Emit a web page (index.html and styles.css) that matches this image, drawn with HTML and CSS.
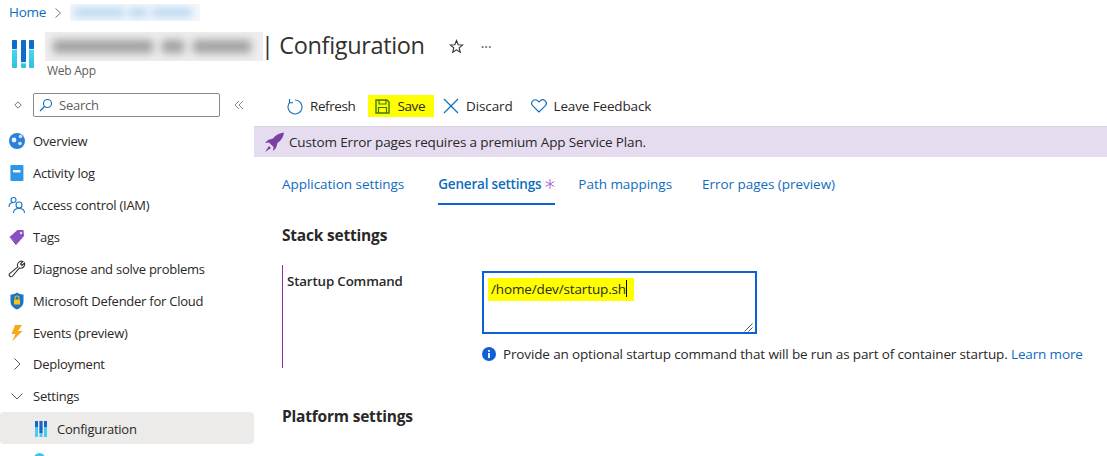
FILE: index.html
```html
<!DOCTYPE html>
<html>
<head>
  <title>Configuration | Web App</title>
  <link rel="stylesheet" href="styles.css">
</head>
<body>
  <div class="crumbs">
    <a href="#">Home</a>
    <svg class="crumb-sep" width="8" height="12" viewBox="0 0 8 12"><path d="M1.5 1.5 6.5 6l-5 4.500" fill="none" stroke="#777" stroke-width="1"/></svg>
    <span class="blur-box crumb-blur"><i></i><i></i><i></i></span>
  </div>

  <div class="title-row">
    <svg class="app-icon" width="24" height="29" viewBox="0 0 24 29">
      <defs><linearGradient id="bar" x1="0" y1="0" x2="0" y2="1"><stop offset="0" stop-color="#50e6ff"/><stop offset="1" stop-color="#32bedd"/></linearGradient></defs>
      <rect x="0" y="0" width="5" height="28" rx="1" fill="url(#bar)"/><rect x="0" y="0" width="5" height="9" rx="1" fill="#0f6cc8"/><rect x="0" y="9" width="5" height="1" fill="#c8eefa"/>
      <rect x="9" y="0" width="5" height="28" rx="1" fill="url(#bar)"/><rect x="9" y="0" width="5" height="22" rx="1" fill="#0f6cc8"/><rect x="9" y="22" width="5" height="1.500" fill="#c8eefa"/>
      <rect x="17" y="0" width="5" height="28" rx="1" fill="url(#bar)"/><rect x="17" y="0" width="5" height="9" rx="1" fill="#0f6cc8"/><rect x="17" y="9" width="5" height="1" fill="#c8eefa"/>
    </svg>
    <div class="title-text">
      <div class="title-line">
        <span class="blur-box title-blur"><i></i><i></i><i></i></span>
        <h1>| Configuration</h1>
        <svg class="star" width="15" height="15" viewBox="0 0 15 15"><path d="M7.500 1.500 9.200 5.700l4.400.3-3.400 2.900 1.100 4.400-3.800-2.400-3.800 2.400 1.100-4.400L1.400 6l4.400-.3z" fill="none" stroke="#333" stroke-width="1.100"/></svg>
        <span class="more">···</span>
      </div>
      <div class="subtitle">Web App</div>
    </div>
  </div>

  <div class="main">
    <aside class="sidebar">
      <div class="search-row">
        <svg width="8" height="8" viewBox="0 0 8 8"><path d="M4 .8 7.200 4 4 7.200.8 4z" fill="none" stroke="#777"/></svg>
        <div class="search">
          <svg width="14" height="14" viewBox="0 0 14 14"><circle cx="8.500" cy="5.500" r="4" fill="none" stroke="#0f6cbd" stroke-width="1.100"/><path d="M5.500 8.500 1 13" stroke="#0f6cbd" stroke-width="1.200"/></svg>
          <span>Search</span>
        </div>
        <svg width="10" height="10" viewBox="0 0 10 10"><path d="M5 1 1 5l4 4M9 1 5 5l4 4" fill="none" stroke="#888"/></svg>
      </div>

      <nav class="nav">
        <div class="nav-item">
          <svg width="18" height="18" viewBox="0 0 18 18"><circle cx="9" cy="9" r="8" fill="#2b80d8"/><circle cx="6" cy="8" r="2.400" fill="#e4f1fb"/><circle cx="12.500" cy="4.500" r="1.800" fill="#cfe6f8"/><circle cx="12" cy="11.500" r="1.800" fill="#cfe6f8"/></svg>
          <span>Overview</span>
        </div>
        <div class="nav-item">
          <svg width="18" height="18" viewBox="0 0 18 18"><rect x="2.500" y="1" width="13.500" height="16" rx="1" fill="#a9d4f2"/><rect x="2.500" y="1" width="12.500" height="16" rx="1" fill="#2f95e6"/><rect x="5" y="6" width="7.500" height="2.500" fill="#eaf5fd"/></svg>
          <span>Activity log</span>
        </div>
        <div class="nav-item">
          <svg width="18" height="18" viewBox="0 0 18 18" fill="none" stroke="#1b74c8" stroke-width="1.100"><circle cx="5.500" cy="4" r="2.500"/><path d="M1 11c0-3 2-4.500 4.500-4.500"/><circle cx="11" cy="9" r="3"/><path d="M5.500 17c0-3 2.500-4.500 5.500-4.500s5.500 1.500 5.500 4.500"/></svg>
          <span>Access control (IAM)</span>
        </div>
        <div class="nav-item">
          <svg width="18" height="18" viewBox="0 0 18 18"><path d="M1.500 9 9.500 2H15.500L16 8 9 16z" fill="#8a4fc4"/><path d="M1.500 9 9 16l-1 1z" fill="#5d2e94"/><circle cx="13" cy="5" r="1.300" fill="#e6d8f5"/></svg>
          <span>Tags</span>
        </div>
        <div class="nav-item">
          <svg width="18" height="18" viewBox="0 0 18 18"><path d="M10.500 2.500a4 4 0 0 1 4.500-1L12.500 4l1.500 1.500L16.500 3a4 4 0 0 1-5 5L4.500 16a1.700 1.700 0 0 1-2.800-2.300L9.800 6.800a4 4 0 0 1 .7-4.300z" fill="none" stroke="#333" stroke-width="1.100"/></svg>
          <span>Diagnose and solve problems</span>
        </div>
        <div class="nav-item">
          <svg width="18" height="18" viewBox="0 0 18 18"><path d="M9 .5c2 1.500 4.500 2 6.500 2v7c0 4-3 6.500-6.500 8-3.500-1.500-6.500-4-6.500-8v-7c2 0 4.500-.5 6.500-2z" fill="#1b74c8"/><rect x="6" y="7.500" width="6" height="5" rx=".6" fill="#f5c518"/><path d="M7 7.500V6a2 2 0 0 1 4 0v1.500" fill="none" stroke="#f5c518" stroke-width="1.100"/></svg>
          <span>Microsoft Defender for Cloud</span>
        </div>
        <div class="nav-item">
          <svg width="18" height="18" viewBox="0 0 18 18"><path d="M7 1h7l-4 6h4.500L4 17.500 7.500 10H3.500z" fill="#f7a81b"/></svg>
          <span>Events (preview)</span>
        </div>
        <div class="nav-item tight">
          <svg width="18" height="18" viewBox="0 0 18 18"><path d="M6.500 3.500 12 9l-5.500 5.500" fill="none" stroke="#555" stroke-width="1"/></svg>
          <span>Deployment</span>
        </div>
        <div class="nav-item">
          <svg width="18" height="18" viewBox="0 0 18 18"><path d="M3.500 6.500 9 12l5.500-5.500" fill="none" stroke="#555" stroke-width="1"/></svg>
          <span>Settings</span>
        </div>
        <div class="nav-item active">
          <svg width="14" height="18" viewBox="0 0 14 18">
            <rect x="1" y="1" width="3" height="16" fill="#50c8f5"/><rect x="1" y="1" width="3" height="6" fill="#1667c8"/>
            <rect x="5.500" y="1" width="3" height="16" fill="#50c8f5"/><rect x="5.500" y="1" width="3" height="12" fill="#1667c8"/>
            <rect x="10" y="1" width="3" height="16" fill="#50c8f5"/><rect x="10" y="1" width="3" height="6" fill="#1667c8"/>
          </svg>
          <span>Configuration</span>
        </div>
        <div class="peek"></div>
      </nav>
    </aside>

    <main class="content">
      <div class="toolbar">
        <div class="tool narrow">
          <svg width="16" height="17" viewBox="0 0 16 17"><path d="M8 2a7 7 0 1 1-5.500 2.700" fill="none" stroke="#0f6cbd" stroke-width="1.100"/><path d="M2.500 1V4.700H6" fill="none" stroke="#0f6cbd" stroke-width="1.100"/></svg>
          <span>Refresh</span>
        </div>
        <div class="tool narrow hl">
          <svg width="15" height="15" viewBox="0 0 15 15"><path d="M1 1h11l2 2v11H1z" fill="none" stroke="#3a7a10" stroke-width="1.400"/><path d="M4 1v4h7V1M3.500 14V8.500h8V14" fill="none" stroke="#3a7a10" stroke-width="1.200"/></svg>
          <span>Save</span>
        </div>
        <div class="tool">
          <svg width="16" height="16" viewBox="0 0 16 16"><path d="M1 1l14 14M15 1 1 15" stroke="#0f6cbd" stroke-width="1.200"/></svg>
          <span>Discard</span>
        </div>
        <div class="tool">
          <svg width="16" height="14" viewBox="0 0 16 14"><path d="M8 13 1.800 6.800a3.500 3.500 0 0 1 5-5L8 3l1.200-1.200a3.500 3.500 0 0 1 5 5z" fill="none" stroke="#0f6cbd" stroke-width="1.100"/></svg>
          <span>Leave Feedback</span>
        </div>
      </div>

      <div class="banner">
        <svg width="21" height="21" viewBox="0 0 21 21"><path d="M20 .5c-5 .5-8.500 2.500-11 6l-5 1.500L1 11l4-.5 4.500 4.500-.5 4 3-3 1.500-5c3.500-2.500 6-6 6.500-10.500z" fill="#7a3fa0"/><path d="M5 14 1 20l6-4z" fill="#7a3fa0"/></svg>
        <span>Custom Error pages requires a premium App Service Plan.</span>
      </div>

      <div class="tabs">
        <a class="tab" href="#">Application settings</a>
        <a class="tab current" href="#">General settings<svg width="10" height="10" viewBox="0 0 10 10"><path d="M5 0v10M.7 2.500l8.600 5M9.300 2.500l-8.600 5" stroke="#a259c9" stroke-width=".9"/></svg></a>
        <a class="tab" href="#">Path mappings</a>
        <a class="tab" href="#">Error pages (preview)</a>
      </div>

      <h2 class="section">Stack settings</h2>

      <div class="field">
        <label>Startup Command</label>
        <div class="field-body">
          <div class="textbox">
            <span class="typed">/home/dev/startup.sh<b class="caret"></b></span>
            <svg class="grip" width="9" height="9" viewBox="0 0 9 9"><path d="M8.500 .5 .5 8.500M8.500 4.500l-4 4" stroke="#555" stroke-width="1"/></svg>
          </div>
          <div class="hint">
            <svg width="14" height="14" viewBox="0 0 14 14"><circle cx="7" cy="7" r="7" fill="#0f5fd7"/><rect x="6.100" y="6" width="1.800" height="5" fill="#fff"/><rect x="6.100" y="3" width="1.800" height="1.800" fill="#fff"/></svg>
            <span>Provide an optional startup command that will be run as part of container startup. <a href="#">Learn more</a></span>
          </div>
        </div>
      </div>

      <h2 class="section platform">Platform settings</h2>
    </main>
  </div>
</body>
</html>
```

FILE: styles.css
```css
* {
  box-sizing: border-box;
}
html, body {
  height: 456px;
  overflow: hidden;
}
body {
  margin: 0;
  background: #fff;
  color: #292827;
  font-family: "Open Sans", "Noto Sans", sans-serif;
  font-size: 13px;
  letter-spacing: -0.25px;
}
a {
  color: #0f6cbd;
  text-decoration: none;
}
svg {
  flex: none;
}

/* breadcrumb */
.crumbs {
  display: flex;
  align-items: center;
  height: 24px;
  padding-left: 9px;
  gap: 8px;
}
.crumbs a {
  font-size: 13.5px;
}
.crumb-sep {
  margin-top: 1px;
}
.blur-box {
  display: flex;
  align-items: center;
  overflow: hidden;
}
.blur-box i {
  display: block;
  filter: blur(4px);
}
.crumb-blur {
  width: 130px;
  height: 17px;
  gap: 5px;
  padding-left: 4px;
  background: #f4f8fc;
}
.crumb-blur i {
  height: 7px;
  width: 50px;
  background: #a8cdee;
}
.crumb-blur i:nth-child(2) {
  width: 18px;
}
.crumb-blur i:nth-child(3) {
  width: 40px;
}

/* title */
.title-row {
  display: flex;
  align-items: flex-start;
  height: 62px;
  padding: 16px 0 0 12px;
}
.title-text {
  margin: -8px 0 0 9px;
}
.title-line {
  display: flex;
  align-items: center;
  height: 29px;
}
.title-blur {
  width: 218px;
  height: 29px;
  gap: 9px;
  padding: 0 8px;
  background: #eeeeee;
}
.title-blur i {
  height: 13px;
  width: 100px;
  background: #a0a0a0;
}
.title-blur i:nth-child(2) {
  width: 22px;
}
.title-blur i:nth-child(3) {
  width: 58px;
}
h1 {
  margin: -3px 0 0 -2px;
  font-size: 23.5px;
  font-weight: 400;
  letter-spacing: -0.35px;
  color: #323130;
}
.star {
  margin-left: 24px;
}
.more {
  margin-left: 17px;
  font-size: 14px;
  color: #555;
  letter-spacing: 0;
}
.subtitle {
  margin: 1px 0 0 2px;
  font-size: 12px;
  color: #605e5c;
}

/* sidebar */
.main {
  display: flex;
}
.sidebar {
  width: 254px;
  flex: none;
}
.search-row {
  display: flex;
  align-items: center;
  height: 38px;
  padding-left: 14px;
  gap: 7px;
}
.search {
  display: flex;
  align-items: center;
  gap: 6px;
  width: 187px;
  height: 24px;
  margin-left: 4px;
  padding-left: 5px;
  border: 1px solid #8a8886;
  border-radius: 2px;
  color: #605e5c;
}
.search-row > svg:last-child {
  margin-left: 7px;
}
.nav {
  margin-top: 1px;
}
.nav-item {
  display: flex;
  align-items: center;
  height: 32px;
  padding-left: 8px;
  gap: 7px;
}
.nav-item.tight {
  height: 31px;
  padding-bottom: 2px;
}
.nav-item.active {
  padding-top: 2px;
  padding-left: 34px;
  gap: 9px;
  background: #edebe9;
  border-radius: 4px;
}
.peek {
  width: 11px;
  height: 11px;
  margin: 9px 0 0 34px;
  background: #3cc4e8;
  border-radius: 50%;
}

/* right side */
.content {
  flex: 1;
  min-width: 0;
  font-size: 13.5px;
  letter-spacing: -0.14px;
}
.toolbar {
  display: flex;
  align-items: center;
  height: 40px;
  padding-left: 33px;
}
.tool {
  display: flex;
  align-items: center;
  gap: 7px;
  height: 22px;
  margin-right: 13px;
}
.tool.narrow {
  letter-spacing: -0.4px;
}
.tool.hl {
  margin-right: 9px;
  padding: 0 9px 0 7px;
  background: #ffff00;
}
.tool:nth-child(3) {
  margin-right: 18px;
}
.banner {
  display: flex;
  align-items: center;
  gap: 4px;
  height: 31px;
  padding-left: 10px;
  background: #e5dcf0;
  border-top: 1px solid #d8d4dc;
}
.tabs {
  display: flex;
  height: 48px;
  margin-left: 28px;
  letter-spacing: -0.04px;
}
.tab {
  height: 48px;
  padding-top: 18px;
  margin-right: 34px;
}
.tab.current {
  display: flex;
  align-items: flex-start;
  gap: 4px;
  margin-right: 23px;
  font-weight: 600;
  letter-spacing: -0.2px;
  color: #0f6cbd;
  border-bottom: 2px solid #0f5fd7;
}
.tab.current svg {
  margin-top: 4px;
}
.tab:nth-child(3) {
  margin-right: 30px;
}
.section {
  margin: 20px 0 0 28px;
  font-size: 15.5px;
  font-weight: 700;
  letter-spacing: -0.2px;
  color: #292827;
  line-height: 20px;
}
.section.platform {
  margin-top: 38px;
}
.field {
  display: flex;
  margin: 20px 0 0 28px;
  height: 103px;
  padding-left: 4px;
  border-left: 1px solid #8f2da8;
}
.field label {
  width: 195px;
  padding-top: 7px;
  font-size: 13.3px;
  font-weight: 600;
}
.textbox {
  position: relative;
  width: 275px;
  height: 63px;
  margin-top: 6px;
  padding: 5px 0 0 4px;
  border: 2px solid #0f5fd7;
}
.typed {
  display: inline-block;
  height: 23px;
  line-height: 22px;
  padding: 0 7px 0 3px;
  background: #ffff00;
}
.caret {
  display: inline-block;
  width: 1px;
  height: 17px;
  vertical-align: -3px;
  background: #000;
}
.grip {
  position: absolute;
  right: 2px;
  bottom: 0;
}
.hint {
  display: flex;
  align-items: center;
  gap: 7px;
  margin-top: 11px;
  white-space: nowrap;
  letter-spacing: -0.14px;
}
```
